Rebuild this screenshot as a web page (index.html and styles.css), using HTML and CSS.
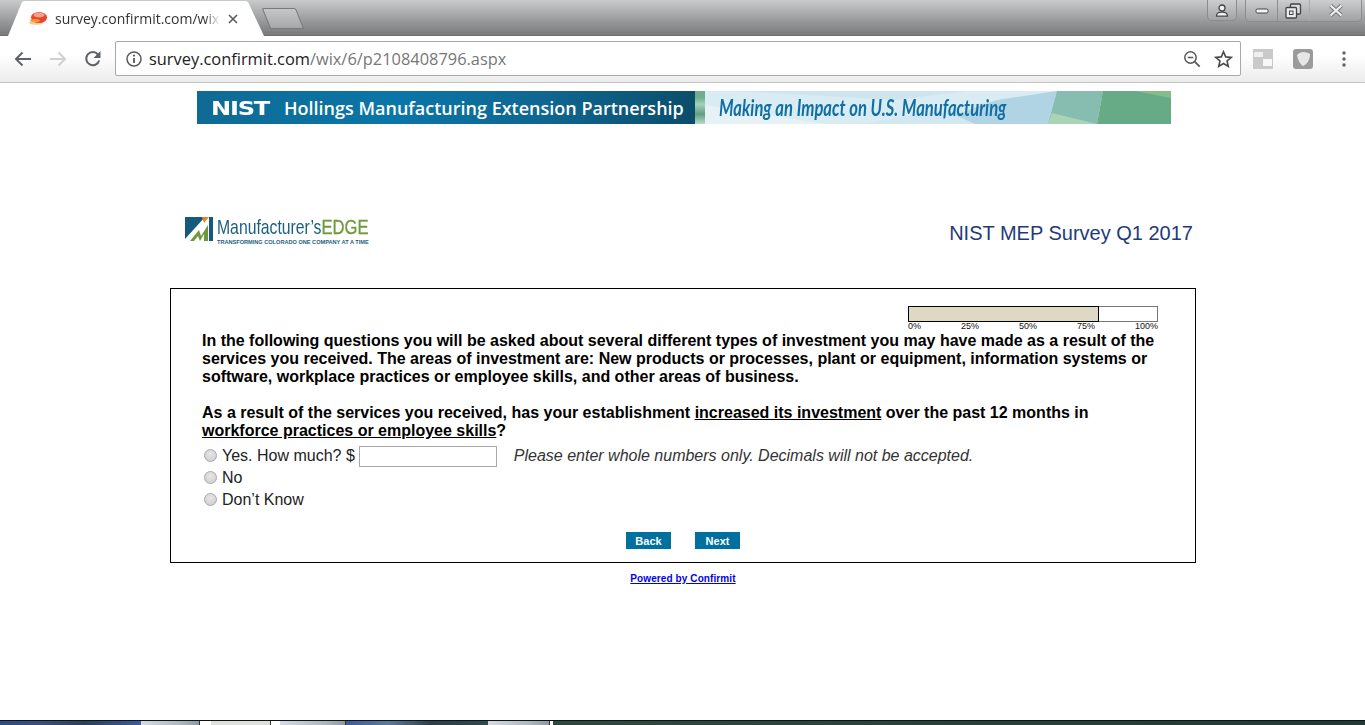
FILE: index.html
```html
<!DOCTYPE html>
<html lang="en">
<head>
    <meta charset="UTF-8">
    <meta name="viewport" content="width=device-width, initial-scale=1.0">
    <title>NIST MEP Survey Q1 2017</title>
    <link rel="stylesheet" href="styles.css">
</head>
<body>
    <div class="window">
        <div class="tabstrip">
            <div class="tab">
                <svg class="favicon" width="20" height="16" viewBox="0 0 20 16">
                    <ellipse cx="8" cy="12" rx="7" ry="1.8" fill="#f5c9a0"/>
                    <ellipse cx="11" cy="6.5" rx="8" ry="5.5" fill="#e8452c"/>
                    <ellipse cx="11" cy="4" rx="5.5" ry="2.4" fill="#f7a08c"/>
                    <ellipse cx="7" cy="9.5" rx="5" ry="1.6" fill="#f59a2e"/>
                </svg>
                <span class="tab-title">survey.confirmit.com/wix</span>
                <svg class="tab-close" width="10" height="10" viewBox="0 0 10 10">
                    <path d="M1 1l8 8M9 1l-8 8" stroke="#5a5a5a" stroke-width="1.6"/>
                </svg>
            </div>
            <div class="new-tab"></div>
            <div class="window-controls">
                <div class="win-btn user-btn">
                    <svg width="14" height="13" viewBox="0 0 14 13">
                        <circle cx="7" cy="4" r="3" fill="#f0f0f0" stroke="#444" stroke-width="1.3"/>
                        <path d="M1.5 12.2c0-3 2-4 5.500-4s5.500 1 5.500 4z" fill="#f4f4f4" stroke="#444" stroke-width="1.2"/>
                    </svg>
                </div>
                <div class="win-group">
                    <div class="win-btn min-btn">
                        <svg width="14" height="6" viewBox="0 0 14 6"><rect x="1" y="1" width="12" height="4" rx="1.500" fill="#f4f4f4" stroke="#444"/></svg>
                    </div>
                    <div class="win-btn max-btn">
                        <svg width="17" height="16" viewBox="0 0 17 16">
                            <rect x="5.500" y="1" width="10" height="10" rx="1" fill="#ddd" stroke="#444" stroke-width="1.300"/>
                            <rect x="1" y="4.500" width="10.500" height="10.500" rx="1" fill="#eee" stroke="#444" stroke-width="1.300"/>
                            <rect x="4.500" y="8" width="3.500" height="3.500" fill="none" stroke="#444"/>
                        </svg>
                    </div>
                    <div class="win-btn close-btn">
                        <svg width="16" height="13" viewBox="0 0 16 13">
                            <path d="M2.500 1.500l11 10M13.500 1.500l-11 10" stroke="#777" stroke-width="4.200"/>
                            <path d="M2.500 1.500l11 10M13.500 1.500l-11 10" stroke="#f0f0f0" stroke-width="2.200"/>
                        </svg>
                    </div>
                </div>
            </div>
        </div>

        <div class="toolbar">
            <svg class="nav-icon" width="18" height="16" viewBox="0 0 18 16">
                <path d="M17 8H2M8.500 1.500L2 8l6.500 6.500" fill="none" stroke="#5f6368" stroke-width="2"/>
            </svg>
            <svg class="nav-icon" width="18" height="16" viewBox="0 0 18 16">
                <path d="M1 8h15M9.500 1.500L16 8l-6.500 6.500" fill="none" stroke="#d0d1d2" stroke-width="2"/>
            </svg>
            <svg class="nav-icon" width="18" height="18" viewBox="0 0 18 18">
                <path d="M15.200 10.500A6.600 6.600 0 1 1 14 4.500" fill="none" stroke="#5f6368" stroke-width="2"/>
                <path d="M16.500 1v7h-7z" fill="#5f6368"/>
            </svg>
            <div class="omnibox">
                <svg width="16" height="16" viewBox="0 0 16 16">
                    <circle cx="8" cy="8" r="7" fill="none" stroke="#5a5a5a" stroke-width="1.500"/>
                    <path d="M8 7v5" stroke="#5a5a5a" stroke-width="1.800"/>
                    <circle cx="8" cy="4.600" r="1.100" fill="#5a5a5a"/>
                </svg>
                <div class="url"><span class="url-host">survey.confirmit.com</span>/wix/6/p2108408796.aspx</div>
                <svg width="18" height="18" viewBox="0 0 18 18">
                    <circle cx="7.500" cy="7.500" r="5.700" fill="none" stroke="#5a5a5a" stroke-width="1.500"/>
                    <path d="M4.800 7.500h5.400" stroke="#5a5a5a" stroke-width="1.500"/>
                    <path d="M11.700 11.700l5 5" stroke="#5a5a5a" stroke-width="1.800"/>
                </svg>
                <svg class="star" width="19" height="18" viewBox="0 0 19 18">
                    <path d="M9.500 1.800l2.200 5.100 5.500.5-4.200 3.600 1.300 5.400-4.800-2.900-4.800 2.900 1.300-5.400L1.800 7.400l5.500-.5z" fill="none" stroke="#4a4a4a" stroke-width="1.600"/>
                </svg>
            </div>
            <div class="ext-icon ext-tabs"><span></span><span></span></div>
            <div class="ext-icon ext-shield">
                <svg width="20" height="20" viewBox="0 0 20 20">
                    <rect width="20" height="20" rx="3" fill="#9b9b9b"/>
                    <path d="M10 3c3 0 6 1 7 2 0 6-3 10-7 12-2-1-5-5-6-11 2-2 4-3 6-3z" fill="#e6e6e6"/>
                </svg>
            </div>
            <svg class="menu-dots" width="4" height="16" viewBox="0 0 4 16">
                <circle cx="2" cy="2" r="1.700" fill="#5f6368"/>
                <circle cx="2" cy="8" r="1.700" fill="#5f6368"/>
                <circle cx="2" cy="14" r="1.700" fill="#5f6368"/>
            </svg>
        </div>

        <div class="page">
            <div class="banner">
                <div class="banner-left">
                    <span class="nist-logo">NIST</span>
                    <span class="banner-name">Hollings Manufacturing Extension Partnership</span>
                </div>
                <div class="banner-strip"></div>
                <div class="banner-right">
                    <svg class="banner-art" width="466" height="33" viewBox="0 0 466 33">
                        <path d="M0 14L120 33H0z" fill="#e6f2f6"/>
                        <path d="M28 0h234l-72 9z" fill="#cfe5ed"/>
                        <path d="M292 9l60-9-9 33H158z" fill="#d2e7ef"/>
                        <path d="M292 9l60-9-9 33H270l-20-9z" fill="#b0d4e3"/>
                        <path d="M352 0h46l-6 33h-49z" fill="#86bdb0"/>
                        <path d="M343 33l4-11 45 11z" fill="#aad4b8"/>
                        <path d="M398 0h68v33h-74z" fill="#66ab85"/>
                        <path d="M430 0h36v7z" fill="#86bc88"/>
                    </svg>
                    <span class="banner-slogan">Making an Impact on U.S. Manufacturing</span>
                </div>
            </div>

            <div class="survey-head">
                <div class="edge-logo">
                    <svg width="28" height="24" viewBox="0 0 28 24">
                        <path d="M0 0h20L0 22z" fill="#15597c"/>
                        <path d="M17 0h7l-5 6z" fill="#e08a2a"/>
                        <path d="M24 0h4v24h-4z" fill="#15597c"/>
                        <path d="M5 24l9-11 2 6 7-11v16h-4v-7l-4 7-2-5-4 5z" fill="#6f9a3c"/>
                    </svg>
                    <div class="edge-text">
                        <div class="edge-name">Manufacturer’s<span class="edge-word">EDGE</span></div>
                        <div class="edge-tag">TRANSFORMING COLORADO ONE COMPANY AT A TIME</div>
                    </div>
                </div>
                <div class="survey-title">NIST MEP Survey Q1 2017</div>
            </div>

            <div class="survey-box">
                <div class="progress">
                    <div class="progress-bar"><div class="progress-fill"></div></div>
                    <div class="progress-labels">
                        <span>0%</span><span>25%</span><span>50%</span><span>75%</span><span>100%</span>
                    </div>
                </div>

                <p class="question">In the following questions you will be asked about several different types of investment you may have made as a result of the services you received. The areas of investment are: New products or processes, plant or equipment, information systems or software, workplace practices or employee skills, and other areas of business.</p>
                <p class="question gap">As a result of the services you received, has your establishment <u>increased its investment</u> over the past 12 months in <u>workforce practices or employee skills</u>?</p>

                <div class="answers">
                    <label class="answer">
                        <input type="radio" name="q1">
                        <span>Yes. How much? $</span>
                        <input type="text" class="amount">
                        <em class="note">Please enter whole numbers only. Decimals will not be accepted.</em>
                    </label>
                    <label class="answer"><input type="radio" name="q1"><span>No</span></label>
                    <label class="answer"><input type="radio" name="q1"><span>Don’t Know</span></label>
                </div>

                <div class="buttons">
                    <button>Back</button>
                    <button>Next</button>
                </div>
            </div>

            <a class="powered" href="#">Powered by Confirmit</a>
        </div>

        <div class="taskbar">
            <div class="task-start"></div>
            <div class="task-item t1"></div>
            <div class="task-item t2"></div>
            <div class="task-item t3"></div>
            <div class="task-gap"></div>
            <div class="task-item t4"></div>
            <div class="task-rest"></div>
        </div>
    </div>
</body>
</html>
```

FILE: styles.css
```css
* {
    box-sizing: border-box;
}
html, body {
    margin: 0;
    height: 100%;
    overflow: hidden;
}
body {
    font-family: "Liberation Sans", Arial, sans-serif;
    background-color: white;
    color: #000;
}
.window {
    height: 725px;
    display: flex;
    flex-direction: column;
}

/* tab strip */
.tabstrip {
    height: 36px;
    flex: none;
    display: flex;
    align-items: flex-end;
    padding-left: 8px;
    background: linear-gradient(#c8cacb, #77797b);
    border-bottom: 1px solid #6d6f71;
}
.tab {
    width: 256px;
    height: 35px;
    margin-bottom: -1px;
    padding: 0 20px 0 20px;
    display: flex;
    align-items: center;
    background-color: white;
    clip-path: polygon(0 100%, 14px 1px, 16px 0, 238px 0, 240px 1px, 256px 100%);
}
.favicon {
    flex: none;
    margin-right: 7px;
}
.tab-title {
    width: 165px;
    flex: none;
    overflow: hidden;
    white-space: nowrap;
    font-family: "Open Sans", sans-serif;
    font-size: 14px;
    color: #333;
    -webkit-mask-image: linear-gradient(to right, #000 150px, transparent);
    mask-image: linear-gradient(to right, #000 150px, transparent);
}
.tab-close {
    flex: none;
    margin-left: 8px;
}
.new-tab {
    width: 34px;
    height: 21px;
    margin: 0 0 6px 2px;
    background: linear-gradient(#c4c6c7, #a6a8aa);
    border: 1px solid #77797b;
    border-radius: 2px;
    transform: skewX(22deg);
}
.window-controls {
    margin-left: auto;
    align-self: flex-start;
    display: flex;
    gap: 8px;
    padding-right: 3px;
}
.win-btn {
    height: 21px;
    display: flex;
    align-items: center;
    justify-content: center;
}
.user-btn {
    width: 30px;
    border: 1px solid #8a8c8e;
    border-top: none;
    border-radius: 0 0 5px 5px;
    background-color: rgba(255, 255, 255, 0.08);
}
.win-group {
    display: flex;
    border: 1px solid #8a8c8e;
    border-top: none;
    border-radius: 0 0 5px 5px;
    background-color: rgba(255, 255, 255, 0.08);
}
.min-btn {
    width: 32px;
    border-right: 1px solid #8a8c8e;
}
.max-btn {
    width: 32px;
    border-right: 1px solid #a9abac;
}
.close-btn {
    width: 51px;
}

/* toolbar */
.toolbar {
    height: 47px;
    flex: none;
    display: flex;
    align-items: center;
    padding: 0 19px 1px 14px;
    background: linear-gradient(#ffffff 40%, #ececec);
    border-bottom: 1px solid #c6c6c6;
}
.nav-icon {
    flex: none;
    margin-right: 17px;
}
.omnibox {
    width: 1126px;
    height: 35px;
    margin-left: -4px;
    flex: none;
    display: flex;
    align-items: center;
    padding: 0 7px 0 10px;
    background-color: white;
    border: 1px solid #a9a9a9;
    border-radius: 2px;
}
.url {
    flex: 1;
    margin-left: 7px;
    font-family: "Open Sans", sans-serif;
    font-size: 16.4px;
    color: #777;
    white-space: nowrap;
}
.url-host {
    color: #222;
}
.star {
    margin-left: 13px;
}
.ext-icon {
    width: 20px;
    height: 20px;
    flex: none;
}
.ext-tabs {
    margin-left: 12px;
    background-color: #c9c9c9;
    display: grid;
    grid-template-columns: 1fr 1fr;
    grid-template-rows: 1fr 1fr;
}
.ext-tabs span:first-child {
    background-color: #efefef;
    margin: 3px 0 2px 1px;
}
.ext-tabs span:last-child {
    grid-column: 2;
    grid-row: 2;
    background-color: #f7f7f7;
    margin: 0 1px 3px 0;
}
.ext-shield {
    margin-left: 20px;
}
.menu-dots {
    flex: none;
    margin-left: 29px;
}

/* page */
.page {
    flex: 1;
    display: flex;
    flex-direction: column;
    align-items: center;
    padding: 8px 0 0 1px;
}
.banner {
    width: 974px;
    height: 33px;
    flex: none;
    margin-left: 2px;
    display: flex;
}
.banner-left {
    width: 498px;
    flex: none;
    display: flex;
    align-items: center;
    padding-left: 14px;
    background: linear-gradient(100deg, #0f6a94 0%, #0a76a8 40%, #0f6690 70%, #0b4d6a 100%);
}
.nist-logo {
    width: 58px;
    font-family: "DejaVu Sans", sans-serif;
    font-weight: bold;
    font-size: 19px;
    letter-spacing: -1px;
    color: white;
    transform: scaleX(1.27);
    transform-origin: left center;
}
.banner-name {
    margin-left: 15px;
    font-family: "Open Sans", sans-serif;
    font-weight: 600;
    font-size: 18px;
    color: white;
    white-space: nowrap;
}
.banner-strip {
    width: 10px;
    flex: none;
    background: linear-gradient(#6fae8c 20%, #a5d0bc 40%, #5f9e80 70%, #b9dccb);
}
.banner-right {
    position: relative;
    flex: 1;
    display: flex;
    align-items: center;
    padding-left: 14px;
    background-color: #d9ecf3;
}
.banner-art {
    position: absolute;
    left: 0;
    top: 0;
}
.banner-slogan {
    position: relative;
    font-family: "Lato", sans-serif;
    font-style: italic;
    font-weight: bold;
    font-size: 22px;
    color: #0f6ea3;
    white-space: nowrap;
    transform: scaleX(0.755);
    transform-origin: left center;
}
.survey-head {
    width: 1026px;
    height: 164px;
    flex: none;
    display: flex;
    align-items: center;
    justify-content: space-between;
    padding: 55px 3px 0 15px;
}
.edge-logo {
    display: flex;
    align-items: flex-start;
    gap: 4px;
    margin-top: -5px;
}
.edge-name {
    font-size: 18px;
    line-height: 21px;
    color: #1c5f80;
    white-space: nowrap;
    transform: scale(0.875, 1.08);
    transform-origin: left bottom;
}
.edge-word {
    color: #6f9a3c;
    font-size: 19px;
    -webkit-text-stroke: 0.3px #6f9a3c;
}
.edge-tag {
    font-size: 5.600px;
    line-height: 6px;
    font-weight: bold;
    color: #1c5f80;
    white-space: nowrap;
}
.survey-title {
    font-size: 20px;
    color: #1f3a78;
}
.survey-box {
    width: 1026px;
    height: 275px;
    flex: none;
    padding: 17px 37px 0 31px;
    border: 1px solid black;
}
.progress {
    width: 250px;
    margin-left: auto;
}
.progress-bar {
    height: 16px;
    border: 1px solid #777;
    background-color: white;
}
.progress-fill {
    width: 76.2%;
    height: 14px;
    background-color: #dfd9c4;
    outline: 1px solid black;
}
.progress-labels {
    height: 10px;
    display: flex;
    justify-content: space-between;
    font-size: 9px;
    line-height: 9px;
    color: #111;
}
.question {
    margin: 0;
    font-weight: bold;
    font-size: 16px;
    line-height: 18px;
}
.question.gap {
    margin-top: 18px;
}
.answers {
    margin-top: 5px;
}
.answer {
    height: 22px;
    display: flex;
    align-items: center;
    font-size: 16px;
    color: #222;
}
.answer input[type="radio"] {
    appearance: none;
    width: 13px;
    height: 13px;
    flex: none;
    margin: 0 5px 1px 2px;
    border: 1px solid #a9a9a9;
    border-radius: 50%;
    background: radial-gradient(circle at 50% 35%, #e6e6e6, #cbcbcb);
}
.amount {
    width: 138px;
    height: 21px;
    margin-left: 4px;
    border: 1px solid #a9a9a9;
    background-color: white;
}
.note {
    margin-left: 17px;
    color: #333;
}
.buttons {
    margin-top: 21px;
    display: flex;
    justify-content: center;
    gap: 24px;
    padding-left: 6px;
}
button {
    width: 45px;
    height: 17px;
    padding: 0;
    background-color: #00709f;
    color: white;
    border: none;
    font-family: "Liberation Sans", Arial, sans-serif;
    font-weight: bold;
    font-size: 11px;
}
.powered {
    margin-top: 10px;
    font-weight: bold;
    font-size: 10px;
    letter-spacing: 0.1px;
    color: #0000ee;
}

/* bit of the desktop showing below the window */
.taskbar {
    height: 5px;
    flex: none;
    display: flex;
    border-top: 1px solid #111;
}
.task-start {
    width: 141px;
    background: linear-gradient(to right, #2c4a86, #37507c 30%, #27405c 60%, #3e5c9c);
}
.task-item {
    background: linear-gradient(to right, #d5dbe6, #a9b6c0 70%, #8c9aa3);
    border-right: 1px solid #333;
}
.t1 {
    width: 59px;
    margin-right: 11px;
}
.t2 {
    width: 60px;
    margin-right: 9px;
    background: #dde0dc;
}
.t3 {
    width: 66px;
}
.task-gap {
    width: 142px;
    background: linear-gradient(to right, #3b5aa0, #5b7a9c 30%, #28404a 60%, #2c4a50);
}
.t4 {
    width: 62px;
    margin-right: 3px;
}
.task-rest {
    flex: 1;
    background: linear-gradient(to right, #2a4a40, #1e3a34);
}
```
